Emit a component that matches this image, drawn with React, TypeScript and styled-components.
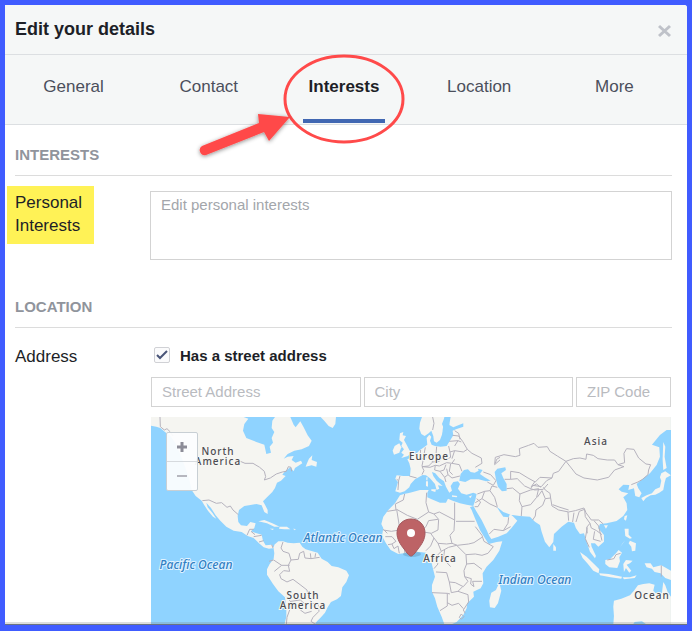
import React, { useState } from "react";
import styled, { createGlobalStyle } from "styled-components";

const GlobalStyle = createGlobalStyle`
  *, *::before, *::after { box-sizing: border-box; }
  body {
    margin: 0;
    background: #405cff;
    font-family: "Liberation Sans", Arial, sans-serif;
    color: #1d1f27;
  }
  button, input, textarea { font-family: inherit; }
`;

const Frame = styled.div`
  min-height: 100vh;
  padding: 5px 5px 6px;
  background: #405cff;
`;

const Dialog = styled.main`
  position: relative;
  background: #ffffff;
  border-radius: 0 3px 0 0;
  overflow: hidden;
`;

const TitleBar = styled.header`
  display: flex;
  align-items: center;
  justify-content: space-between;
  height: 50px;
  padding: 0 15px 2px 10px;
  background: #f5f7f7;
  border-bottom: 1px solid #dcdfe2;
`;

const Title = styled.h1`
  margin: 0;
  font-size: 18px;
  line-height: 24px;
`;

const CloseButton = styled.button`
  display: flex;
  padding: 4px 0 0;
  border: 0;
  background: none;
  color: #bfc2c9;
`;

const TabBar = styled.nav`
  display: grid;
  grid-template-columns: repeat(5, 1fr);
  height: 70px;
  padding: 0 5px 0 1px;
  background: #f5f7f7;
  border-bottom: 1px solid #dcdfe2;
`;

const Tab = styled.button<{ $active?: boolean }>`
  justify-self: center;
  height: 68px;
  padding: 0 6px;
  border: 0;
  border-bottom: 4px solid ${(p) => (p.$active ? "#4167b2" : "transparent")};
  background: none;
  color: ${(p) => (p.$active ? "#1d1f27" : "#4b4f5c")};
  font-size: 17px;
  font-weight: ${(p) => (p.$active ? "bold" : "normal")};
`;

const Section = styled.section`
  padding: 0 15px 0 10px;
`;

const SectionTitle = styled.h2`
  margin: 0;
  padding: 20px 0 10px;
  border-bottom: 1px solid #dcdcdc;
  color: #90949c;
  font-size: 15px;
  line-height: 20px;
`;

const FieldRow = styled.div`
  display: grid;
  grid-template-columns: 135px 1fr;
  align-items: start;
  padding: 15px 0 17px;
`;

const FieldName = styled.label`
  font-size: 17px;
  line-height: 23px;
`;

const MarkedName = styled(FieldName)`
  justify-self: start;
  width: 87px;
  margin: -5px 0 0 -8px;
  padding: 5px 8px 7px;
  background: #fff256;
`;

const TextArea = styled.textarea`
  display: block;
  width: 100%;
  height: 69px;
  padding: 4px 10px;
  border: 1px solid #d3d3d3;
  border-radius: 0;
  outline: 0;
  resize: none;
  font-size: 15px;
  line-height: 18px;
  &::placeholder { color: #a3a6ab; }
`;

const AddressRow = styled(FieldRow)`
  padding: 17px 0 0;
`;

const AddressFields = styled.div`
  padding: 0 1px;
`;

const CheckLabel = styled.label`
  display: flex;
  align-items: center;
  gap: 10px;
  height: 20px;
  margin: 0 3px 12px;
  font-size: 15px;
  font-weight: bold;
`;

const CheckFrame = styled.span`
  display: grid;
  width: 16px;
  height: 16px;
  & > * { grid-area: 1 / 1; }
  svg { pointer-events: none; }
`;

const CheckInput = styled.input`
  appearance: none;
  width: 16px;
  height: 16px;
  margin: 0;
  border: 1px solid #d0d1d5;
  border-radius: 2px;
  background: #fbfbfc;
`;

const InputGrid = styled.div`
  display: grid;
  grid-template-columns: 1fr 1fr 95px;
  column-gap: 3px;
  margin-bottom: 10px;
`;

const TextInput = styled.input`
  width: 100%;
  min-width: 0;
  height: 30px;
  padding: 0 10px 2px;
  border: 1px solid #d3d3d3;
  border-radius: 0;
  outline: 0;
  font-size: 15px;
  &::placeholder { color: #b9bbbf; }
`;

const MapFrame = styled.div`
  position: relative;
  overflow: hidden;
`;

const MapSvg = styled.svg`
  display: block;
  width: 100%;
  background: #8fd3ff;
`;

const MapLabel = styled.text`
  font-family: "Noto Sans", sans-serif;
  font-size: 10px;
  font-weight: 500;
  letter-spacing: 1px;
  text-anchor: middle;
  fill: #4c4c52;
  stroke: #f7f7f4;
  stroke-width: 2px;
  paint-order: stroke;
`;

const OceanLabel = styled(MapLabel)`
  font-size: 12px;
  font-style: italic;
  letter-spacing: normal;
  fill: #3080c4;
  stroke: #e2f3ff;
`;

const ZoomControls = styled.div`
  position: absolute;
  top: 15px;
  left: 15px;
  display: flex;
  flex-direction: column;
  width: 32px;
  border: 1px solid #c8cfd4;
  border-radius: 2px;
  background: rgba(252, 253, 254, 0.95);
`;

const ZoomButton = styled.button`
  display: flex;
  align-items: center;
  justify-content: center;
  height: 28px;
  padding: 0;
  border: 0;
  background: none;
  color: #8d8d98;
  & + & { height: 29px; border-top: 1px solid #d6dade; color: #b6b7bf; }
`;

const BottomEdge = styled.div`
  position: absolute;
  right: 0;
  bottom: 0;
  left: 0;
  height: 3px;
  background: rgba(120, 120, 120, 0.25);
  border-bottom: 1px solid #6c7480;
`;

const Annotation = styled.svg`
  position: absolute;
  top: 45px;
  left: 50%;
  width: 220px;
  margin-left: -156px;
  height: 115px;
  pointer-events: none;
`;

const land = [
  // North America
  "M18 21L296 21L310 26L298 42L294 62L304 84L334 96L358 104L364 132L378 128L374 110L384 98L380 84L388 66L380 54L382 32L390 21L436 21L446 44L452 52L466 34L476 52L488 76L500 92L492 108L470 118L448 122L428 132L416 146L428 140L446 138L440 150L452 158L468 152L472 160L450 174L446 184L436 172L420 184L412 194L422 198L408 212L396 218L390 234L382 246L366 262L354 274L360 284L368 300L368 312L358 306L350 286L334 282L312 286L298 288L282 300L278 318L280 336L288 346L306 348L316 336L332 340L328 354L318 364L330 368L350 374L354 392L362 406L380 404L388 414L372 416L356 412L342 400L326 384L308 378L290 366L266 362L244 350L226 332L212 316L198 294L184 278L188 292L202 308L214 326L204 320L190 304L178 286L170 272L152 258L140 240L132 204L120 170L108 138L92 100L76 78L60 66L46 54L34 50L18 47Z",
  // Newfoundland, northern islands
  "M486 160L492 146L502 136L500 150L516 156L514 170L500 166L482 170Z",
  "M400 21L410 32L426 26L430 21Z",
  // Caribbean
  "M340 334L358 330L382 340L404 350L388 350L366 340Z",
  "M404 350L426 350L436 358L418 358L402 356Z",
  "M374 356L386 356L384 360Z M444 356L452 357L450 361Z",
  // South America
  "M386 416L388 404L400 394L414 394L428 398L446 400L464 398L472 410L482 418L502 424L518 428L530 446L548 456L560 468L580 472L604 482L612 496L604 516L592 532L588 558L576 568L558 576L548 592L540 608L528 622L516 634L508 645L418 645L424 620L424 594L420 562L400 544L384 522L366 494L366 478L374 462L386 446L388 430Z",
];

// Old World shapes, in their own coordinate origin
const oldWorld = [
  // Greenland tip and Iceland side
  "M2 21L48 21L46 42L38 54L26 48L14 34Z",
  // Scandinavia
  "M306 21L300 38L298 56L304 72L314 78L326 70L334 62L340 78L342 94L350 98L360 90L366 74L372 56L366 42L374 21Z",
  // British Isles
  "M240 70L250 66L248 76L258 78L252 90L260 104L268 120L274 128L264 138L244 144L252 134L244 128L252 118L244 108L248 98L238 90Z",
  "M224 108L238 100L244 112L238 128L222 134L218 122Z",
  // Eurasia
  "M385 21L388 45L400 52L430 40L430 50L408 58L398 62L400 76L388 95L380 108L362 110L345 108L335 104L330 92L334 80L328 74L320 84L322 104L312 112L300 120L288 132L280 140L262 148L268 160L272 176L270 198L250 198L230 196L226 206L234 216L226 244L240 248L254 244L268 232L272 222L285 208L296 202L308 195L318 196L330 205L345 222L350 240L358 236L354 226L368 228L350 212L340 198L336 186L346 190L358 204L372 214L378 230L388 248L396 242L392 228L400 216L414 214L420 222L414 236L424 250L440 254L460 248L470 252L466 270L460 288L470 305L485 330L500 360L508 378L514 387L535 380L560 370L574 355L592 332L578 318L570 312L566 322L550 320L540 306L530 290L550 306L572 314L600 318L630 320L645 335L660 345L665 365L675 395L688 412L700 396L702 372L725 350L745 335L762 338L768 355L780 372L792 370L800 395L810 425L825 445L828 438L815 410L813 400L825 400L835 410L852 395L852 375L835 355L840 342L860 340L890 333L910 318L922 300L920 280L910 262L925 250L905 245L896 238L910 224L928 225L925 240L942 235L946 258L958 262L965 250L955 235L950 222L970 205L990 190L1010 165L1020 140L1018 112L996 104L1020 75L1040 60L1053 60L1053 21Z",
  // Africa
  "M460 288L440 284L420 280L398 272L384 266L378 278L360 278L335 268L322 262L322 248L326 240L300 240L270 248L252 252L240 256L225 280L205 300L190 320L184 342L190 355L186 378L198 400L212 420L235 432L262 428L300 426L318 428L325 445L335 460L340 480L345 500L336 525L336 545L345 565L352 590L365 620L374 645L390 645L410 636L430 615L440 595L442 580L462 560L460 545L482 535L490 520L488 490L500 470L520 450L538 422L547 394L530 396L506 402L495 385L480 360L465 325L455 300L450 292Z",
  // Madagascar, Sri Lanka
  "M538 518L544 542L534 580L524 594L510 592L508 572L514 548L528 540Z",
  "M700 402L708 412L708 422L700 422Z",
  // Mediterranean islands
  "M334 238L348 238L346 246L334 242Z M318 214L324 214L324 230L318 228Z M319 202L323 202L322 212L319 210Z M396 256L412 258L410 262L396 260Z M446 260L456 256L452 264Z",
  // Indonesia, Borneo, Philippines
  "M780 426L800 440L820 460L838 478L836 490L820 482L804 462L788 444Z",
  "M838 490L866 492L884 496L906 500L904 506L872 502L840 496Z M908 502L930 502L950 496L944 504L912 508Z",
  "M856 450L870 448L888 430L896 420L906 428L898 442L900 454L892 474L868 472L856 462Z",
  "M910 462L918 450L938 452L930 460L920 464L934 482L928 488L918 474L912 486Z",
  "M914 356L926 356L926 374L936 384L930 386L916 378Z M930 392L948 400L946 422L936 424L934 410L926 400Z M916 390L900 412L908 400Z",
  // New Guinea
  "M974 460L992 460L1000 472L1024 466L1053 482L1053 510L1036 504L1022 490L1004 486L996 476L980 472Z",
  // Taiwan, Hainan, Japan
  "M914 318L922 316L918 332L912 328Z M852 346L864 346L858 356Z",
  "M1024 190L1036 184L1053 196L1038 204L1034 218L1030 240L1018 248L1006 254L992 256L978 264L970 274L964 264L980 256L996 250L1006 238L1020 232L1024 212L1020 202Z",
  "M1030 96L1036 110L1034 140L1040 174L1030 180L1028 148Z",
  // Australia
  "M880 645L882 618L880 590L882 572L904 566L930 556L942 542L954 526L970 522L988 520L1004 524L1000 542L1016 558L1026 548L1030 516L1036 526L1044 548L1053 560L1053 645Z",
];

const inlandWater = [
  // Black Sea and Azov
  "M418 212L422 192L432 180L444 178L452 186L464 188L476 182L474 176L488 180L480 192L494 202L512 212L498 214L476 208L452 208L436 216Z",
  // Caspian
  "M524 186L532 176L556 172L558 180L544 190L550 204L560 222L560 242L546 244L534 230L528 208Z",
  // Baltic gulf, White Sea
  "M374 21L392 21L388 44L378 62L374 80L378 92L366 86L368 60Z",
  "M938 645L944 636L966 634L982 645Z",
];

const borders = [
  "M45 21L46 50L58 60L66 56L76 66L84 78",
  "M286 154L300 160L324 160L344 172L358 184L362 200L358 210L376 204L394 192L412 186L424 184L430 170L438 172L440 184",
  "M172 272L192 270L214 280L230 278L246 292L256 288L264 300L280 314",
  "M306 376L314 358L326 358 M318 364L330 374 M326 380L350 376 M342 396L356 392 M380 404L384 414",
  "M414 396L408 414L414 424L432 430L438 450L430 466L434 484L416 482L404 494L408 506L426 516L444 508L468 526L486 540L490 558L500 580L520 582L522 604L504 622L498 634L510 642",
  "M372 454L386 450L410 466L434 466 M388 484L410 466 M438 450L460 448L464 430L476 424L480 444L498 446L524 442 M496 430L498 446 M512 430L510 442 M424 560L438 576L434 600L426 622L424 645 M438 574L466 570L482 584 M466 600L480 610L500 604",
];

const oldWorldBorders = [
  // Europe
  "M338 60L342 40L338 21 M398 76L416 78L428 94L442 118L430 126L404 122L390 126L386 108 M388 94L414 92L424 96 M404 62L416 70L420 88 M414 92L404 108 M302 120L300 140L310 148L306 168 M316 112L312 134L318 142 M350 110L348 134L362 144L380 148L392 142L390 126 M348 134L330 142L338 156L326 168L306 170 M338 156L358 154L362 144 M306 170L312 182L306 194 M306 170L330 172L346 166L358 168L380 158L396 160L404 148 M346 166L344 180L360 184L372 180L378 164 M360 184L374 202L384 194L380 176 M374 202L378 216 M384 194L396 204L420 198 M392 162L388 184L398 194 M396 160L418 164L426 184 M442 118L456 130L484 144L486 160L466 172 M404 122L396 146 M240 198L236 212L230 208 M236 212L234 240 M268 198L290 204",
  // Middle East and Central Asia
  "M490 186L512 194L528 212L520 226L502 216 M472 252L494 244L510 242L516 228L532 232 M494 244L486 266L466 278 M470 266L482 276L474 290L464 290 M486 266L510 282L532 292 M510 242L524 262L532 290 M508 372L522 358L550 362L572 350 M550 362L564 340L566 322",
  "M540 150L524 164L526 142L552 134L586 140L600 136L598 116L626 106L642 100L654 112L682 110L690 124L712 138L738 154L716 184L700 190L696 204L660 202L646 216L624 204L598 188L572 184L572 208L554 208 M572 208L592 206L614 228L632 236L638 226L664 230L680 212L696 204 M632 236L644 240L670 238L684 222 M560 236L578 234L600 252L632 240L656 236L650 262L632 284L606 290L598 272L600 252 M606 290L604 318 M652 262L666 242L676 266L668 286L648 300L646 318L638 330",
  "M540 142L530 148L526 160 M644 216L634 230L650 222L662 232",
  // India, China, Mongolia
  "M676 266L692 264L690 250L676 240L670 232 M692 264L696 288L716 300L746 306L766 302L792 294L798 308L814 330L836 330L850 342 M698 284L720 292L746 300 M744 306L746 332 M762 308L758 336 M768 336L778 304L794 298L796 320L810 340L800 352L802 370 M810 340L814 354L830 362L846 374 M822 332L836 348L842 374L846 392 M802 352L796 386L808 412 M824 364L820 388L842 394",
  "M738 154L760 146L780 144L798 148L800 132L820 136L834 146L862 150L884 150L894 164L912 170L884 180L866 202L832 210L792 204L768 192L754 174L738 154 M894 164L914 158L912 130L920 116L942 118L956 144L978 162L992 164L986 180L984 194L968 208L954 216L934 224",
  "M862 450L882 446L888 434L902 430 M1024 466L1024 500",
  // Africa
  "M230 298L262 316L292 328L326 306L318 278L320 248 M254 252L250 270L226 282L228 300L202 304 M230 298L240 360L214 364L190 360 M326 306L342 312L356 328L354 360L334 370L300 364L286 370L270 362 M342 312L358 306L404 330L404 278 M408 334L464 334 M404 330L402 362L390 376L396 400L412 406L446 402L462 398L486 382 M354 328L326 332L318 350L300 364 M332 370L342 384L332 408L318 422 M342 384L354 400L380 402L396 400 M354 400L364 424L346 442L334 450 M364 424L386 412L410 406L438 434L466 432L486 436L504 430L520 410L492 394L486 376L466 350 M438 434L440 462L432 482L434 500L444 514L430 530L406 518L388 516L380 488L348 486 M440 462L462 460L486 478 M346 442L354 462L342 476 M434 500L454 506L452 522L462 530L458 514L486 514 M336 548L382 550L390 552 M388 516L394 548L414 544L444 554L446 576L430 600L436 610 M382 550L382 588L360 602 M382 578L396 586L416 580L430 596 M414 544L428 530 M418 622L424 612L432 620L424 628L418 622 M196 380L216 380L228 394L216 402L204 404 M216 402L222 416L234 408L238 430 M242 360L254 380L254 428 M270 362L276 400L278 424 M286 370L290 424 M190 358L202 370 M374 420L370 446L392 470",
];

const WorldMap = () => (
  <MapSvg viewBox="0 0 520 208" role="img" aria-label="World map">
    <g transform="translate(-6 -7) scale(0.3333)" strokeLinejoin="round">
      <g fill="#f5f5f1">
        {land.map((d) => <path key={d} d={d} />)}
      </g>
      <g fill="none" stroke="#b5b2bd" strokeWidth="3">
        {borders.map((d) => <path key={d} d={d} />)}
      </g>
      <g transform="translate(525 0)">
        <g fill="#f5f5f1">
          {oldWorld.map((d) => <path key={d} d={d} />)}
        </g>
        <g fill="#8fd3ff">
          {inlandWater.map((d) => <path key={d} d={d} />)}
        </g>
        <g fill="none" stroke="#b5b2bd" strokeWidth="3">
          {oldWorldBorders.map((d) => <path key={d} d={d} />)}
        </g>
      </g>
    </g>
    <MapLabel x="67" y="38">North</MapLabel>
    <MapLabel x="67" y="48">America</MapLabel>
    <MapLabel x="152" y="182">South</MapLabel>
    <MapLabel x="152" y="192">America</MapLabel>
    <MapLabel x="278" y="43">Europe</MapLabel>
    <MapLabel x="289" y="145">Africa</MapLabel>
    <MapLabel x="445" y="28">Asia</MapLabel>
    <MapLabel x="501" y="182">Ocean</MapLabel>
    <OceanLabel x="45" y="152">Pacific Ocean</OceanLabel>
    <OceanLabel x="192" y="125">Atlantic Ocean</OceanLabel>
    <OceanLabel x="384" y="167">Indian Ocean</OceanLabel>
    <ellipse cx="261" cy="137" rx="9" ry="3" fill="#4c7896" opacity="0.3" />
    <path
      d="M260 139C258 139 256 136 253 132C249 127 246 122 246 116C246 108 252 102 260 102C268 102 274 108 274 116C274 122 271 127 267 132C264 136 262 139 260 139Z"
      fill="#bd6366"
      stroke="#a4595f"
      strokeWidth="1"
    />
    <circle cx="260" cy="116" r="4" fill="#ffffff" />
  </MapSvg>
);

const tabs = ["General", "Contact", "Interests", "Location", "More"];

export default function App() {
  const [active, setActive] = useState("Interests");
  const [hasStreet, setHasStreet] = useState(true);

  return (
    <Frame>
      <GlobalStyle />
      <Dialog>
        <TitleBar>
          <Title>Edit your details</Title>
          <CloseButton type="button" aria-label="Close">
            <svg width="14" height="14" viewBox="0 0 14 14" fill="none" stroke="currentColor" strokeWidth="3">
              <path d="M1 2L12 12M12 2L1 12" />
            </svg>
          </CloseButton>
        </TitleBar>
        <TabBar>
          {tabs.map((name) => (
            <Tab key={name} type="button" $active={name === active} onClick={() => setActive(name)}>
              {name}
            </Tab>
          ))}
        </TabBar>

        <Section>
          <SectionTitle>INTERESTS</SectionTitle>
          <FieldRow>
            <MarkedName htmlFor="interests">Personal Interests</MarkedName>
            <TextArea id="interests" placeholder="Edit personal interests" />
          </FieldRow>
        </Section>

        <Section>
          <SectionTitle>LOCATION</SectionTitle>
          <AddressRow>
            <FieldName htmlFor="street">Address</FieldName>
            <AddressFields>
              <CheckLabel>
                <CheckFrame>
                  <CheckInput
                    type="checkbox"
                    checked={hasStreet}
                    onChange={(e) => setHasStreet(e.target.checked)}
                  />
                  {hasStreet && (
                    <svg width="16" height="16" viewBox="0 0 16 16" fill="none" stroke="#4a5578" strokeWidth="2">
                      <path d="M3 8L6 11L13 4" />
                    </svg>
                  )}
                </CheckFrame>
                Has a street address
              </CheckLabel>
              <InputGrid>
                <TextInput id="street" placeholder="Street Address" />
                <TextInput aria-label="City" placeholder="City" />
                <TextInput aria-label="ZIP Code" placeholder="ZIP Code" />
              </InputGrid>
              <MapFrame>
                <WorldMap />
                <ZoomControls>
                  <ZoomButton type="button" aria-label="Zoom in">
                    <svg width="10" height="10" viewBox="0 0 10 10" stroke="currentColor" strokeWidth="3">
                      <path d="M0 5H10M5 0V10" />
                    </svg>
                  </ZoomButton>
                  <ZoomButton type="button" aria-label="Zoom out">
                    <svg width="10" height="10" viewBox="0 0 10 10" stroke="currentColor" strokeWidth="2">
                      <path d="M0 5H10" />
                    </svg>
                  </ZoomButton>
                </ZoomControls>
              </MapFrame>
            </AddressFields>
          </AddressRow>
        </Section>

        <BottomEdge />
        <Annotation viewBox="0 0 220 115" aria-hidden="true">
          <defs>
            <filter id="arrow-shadow" x="-20%" y="-20%" width="140%" height="150%">
              <feDropShadow dx="0" dy="1" stdDeviation="2" floodColor="#000000" floodOpacity="0.45" />
            </filter>
          </defs>
          <ellipse cx="154" cy="49" rx="59" ry="43" fill="none" stroke="#ff4a4a" strokeWidth="3" />
          <path
            d="M12 96L69 73L68 64L100 67L79 91L74 82L16 105A5 5 0 0 1 12 96Z"
            fill="#ff4a4a"
            filter="url(#arrow-shadow)"
          />
        </Annotation>
      </Dialog>
    </Frame>
  );
}
